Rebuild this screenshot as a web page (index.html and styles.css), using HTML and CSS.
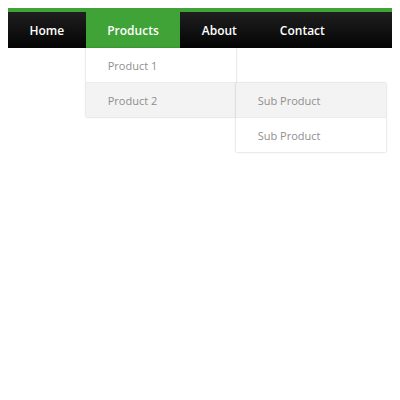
FILE: index.html
```html
<!DOCTYPE html>
<html lang="en">
<head>
    <meta charset="UTF-8">
    <title>Menu</title>
    <link rel="stylesheet" href="styles.css">
</head>
<body>
    <nav class="menu">
        <div class="item"><a class="top" href="#">Home</a></div>
        <div class="item active">
            <a class="top" href="#">Products</a>
            <div class="drop">
                <div class="row"><a href="#">Product 1</a></div>
                <div class="row open">
                    <a href="#">Product 2</a>
                    <div class="drop drop2">
                        <div class="row open"><a href="#">Sub Product</a></div>
                        <div class="row"><a href="#">Sub Product</a></div>
                    </div>
                </div>
            </div>
        </div>
        <div class="item"><a class="top" href="#">About</a></div>
        <div class="item"><a class="top" href="#">Contact</a></div>
    </nav>
</body>
</html>
```

FILE: styles.css
```css
html, body {
    height: 100%;
}

body {
    margin: 0;
    padding: 8px;
    box-sizing: border-box;
    font-family: "Open Sans", "DejaVu Sans", sans-serif;
}

.menu {
    display: flex;
    height: 36px;
    border-top: 4px solid #3fa338;
    background: linear-gradient(#1f1f1f, #040404);
}

.item {
    position: relative;
}

.top {
    display: block;
    padding: 1px 21.5px 0;
    height: 35px;
    line-height: 35px;
    color: #fff;
    font-size: 12px;
    font-weight: 600;
    text-decoration: none;
}

/* активный пункт тянется вверх на зелёную полосу */
.active > .top {
    background: #3fa338;
    margin-top: -4px;
    padding-top: 5px;
}

/* выпадающее меню */
.drop {
    position: absolute;
    top: 36px;
    left: 0;
    width: 150px;
    background: #fff;
    box-shadow: 0 0 2px rgba(0, 0, 0, 0.25);
    z-index: 2;
}

.row {
    position: relative;
    border-top: 1px solid #ebebeb;
}

.row:first-child {
    border-top: none;
}

.row > a {
    display: block;
    height: 34px;
    line-height: 35px;
    padding-left: 22px;
    font-size: 11px;
    color: #8f8f8f;
    text-decoration: none;
}

.open > a {
    background: #f3f3f3;
}

/* подменю справа */
.drop2 {
    top: 0;
    left: 150px;
}
```
